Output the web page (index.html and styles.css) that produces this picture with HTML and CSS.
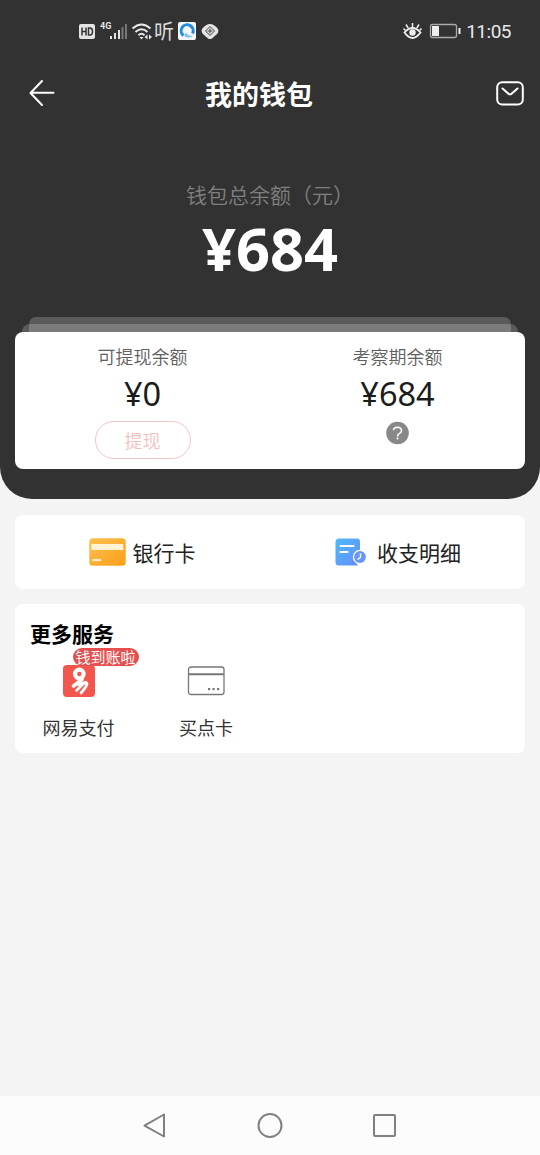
FILE: index.html
```html
<!DOCTYPE html>
<html lang="zh-CN">
<head>
<meta charset="utf-8">
<title>我的钱包</title>
<link rel="stylesheet" href="styles.css">
</head>
<body>
<div class="screen">
  <section class="hero">
    <div class="status">
      <div class="status-left">
        <svg width="145" height="22" viewBox="0 0 145 22">
          <rect x="1" y="4" width="16" height="15" rx="2" fill="#e4e4e4"/>
          <path d="M4 7.500v8M8 7.500v8M4 11.500h4M10.500 8v7h1.500q2.500 0 2.500-3.500T12 8z" fill="none" stroke="#333" stroke-width="1.500"/>
          <g fill="#e4e4e4"><rect x="32" y="16" width="2" height="3"/><rect x="36" y="13" width="2" height="6"/><rect x="40" y="10" width="2" height="9"/></g>
          <g fill="#777"><rect x="43.500" y="7" width="2" height="12"/><rect x="47" y="4" width="2" height="15"/></g>
          <g fill="none" stroke="#e8e8e8" stroke-width="1.900"><path d="M54.500 8.500q9-8 18 0M57.500 12q6-5.500 12 0M60.500 15.200q3-2.800 6 0"/></g>
          <path d="M61.500 17l2 2.500 2-2.500zM69.500 14.500l-3 2.500 3 2.500zM71 14.500l3 2.500-3 2.500z" fill="#e8e8e8"/>
          <rect x="100" y="2" width="18" height="18" rx="2" fill="#f4f8fc"/>
          <path d="M105.500 15.500a6 6 0 1 1 9-2" fill="none" stroke="#238be0" stroke-width="3"/>
          <path d="M106 15q1 3 5 2.500 3 0 4-2-5 1-6.500-3z" fill="#7fc1f4"/>
          <path d="M124 9q8-10 16 0 1 3-1 5l-5 4.500q-2 1.200-4 0l-5-4.500q-2-2-1-5z" fill="#e4e4e4"/>
          <path d="M132 6.500l4.500 4.500-4.500 4.500-4.500-4.500zM129.500 11h5M132 8.500v5" fill="none" stroke="#444" stroke-width="1"/>
        </svg>
        <span class="net">4G</span>
        <span class="listen">听</span>
      </div>
      <div class="status-right">
        <svg width="58" height="22" viewBox="0 0 58 22" fill="none" stroke="#eee">
          <path d="M1.500 12.500q8-9 16 0-8 11-16 0z" stroke-width="1.800"/>
          <circle cx="9.500" cy="12.500" r="3.200" fill="#eee" stroke="none"/>
          <path d="M9.500 3v4M3 4.500l2.200 3.500M16 4.500L13.800 8M.5 8.500l2 2M18.500 8.500l-2 2" stroke-width="1.500"/>
          <rect x="27.500" y="4.500" width="26" height="13" rx="2" stroke="#aaa" stroke-width="1.300"/>
          <rect x="29" y="6" width="7" height="10" fill="#eee" stroke="none"/>
          <path d="M56.500 8v6" stroke-width="2"/>
        </svg>
        <span class="time">11:05</span>
      </div>
    </div>
    <header class="bar">
      <svg width="26" height="28" viewBox="0 0 26 28" fill="none" stroke="#fff" stroke-width="2" stroke-linecap="round" stroke-linejoin="round"><path d="M13 2L1.500 14 13 26M2 13.800h22.500"/></svg>
      <h1 class="title">我的钱包</h1>
      <svg width="28" height="25" viewBox="0 0 28 25" fill="none" stroke="#fff" stroke-width="2" stroke-linecap="round" stroke-linejoin="round"><rect x="1.200" y="1.200" width="25.600" height="22.300" rx="5"/><path d="M6.500 7.500l6 5.300q1.500 1 3 0l6-5.300"/></svg>
    </header>
    <div class="total-label">钱包总余额（元）</div>
    <div class="total">¥684</div>
    <div class="layer back"></div>
    <div class="layer middle"></div>
    <div class="balances">
      <div class="balance">
        <div class="label">可提现余额</div>
        <div class="amount">¥0</div>
        <button class="withdraw">提现</button>
      </div>
      <div class="balance">
        <div class="label">考察期余额</div>
        <div class="amount">¥684</div>
        <svg class="help" width="24" height="24" viewBox="0 0 24 24"><circle cx="11.500" cy="12" r="11.300" fill="#888"/><path d="M7.500 9.300Q7.700 6.200 11.500 6.200q4 .2 4 3.300 0 1.800-2 2.900-2 1-2 3" fill="none" stroke="#fff" stroke-width="1.600"/><circle cx="11.500" cy="17.500" r="1.100" fill="#fff"/></svg>
      </div>
    </div>
  </section>
  <main class="content">
    <section class="card links">
      <div class="link">
        <svg width="37" height="28" viewBox="0 0 37 28"><defs><linearGradient id="gold" x2="1" y2="1"><stop stop-color="#fcc04f"/><stop offset="1" stop-color="#fd9e1b"/></linearGradient></defs><rect x=".3" y=".3" width="36.400" height="27.400" rx="3.500" fill="url(#gold)"/><rect x="2.300" y="6" width="32" height="6" fill="#fff3d5"/><path d="M3.500 22h8.500" stroke="#fff0cc" stroke-width="2.200"/></svg>
        <span class="bank">银行卡</span>
      </div>
      <div class="link">
        <svg width="32" height="28" viewBox="0 0 32 28"><defs><linearGradient id="blue" x2="1" y2="1"><stop stop-color="#4cbcf9"/><stop offset="1" stop-color="#688bfa"/></linearGradient></defs><path d="M4 .5h18a3 3 0 0 1 3 3V12a7 7 0 0 0-5 11l3 4.500H4a3.500 3.500 0 0 1-3.500-3.500V4A3.500 3.500 0 0 1 4 .5z" fill="url(#blue)"/><path d="M5.500 8h13M5.500 14h7" stroke="#fff" stroke-width="2.200" stroke-linecap="round"/><circle cx="25" cy="19" r="7.200" fill="#fff"/><circle cx="25" cy="19" r="5.900" fill="#6896fa"/><path d="M25.500 15.200v4.300l-3 2" fill="none" stroke="#fff" stroke-width="1.400"/></svg>
        <span class="detail">收支明细</span>
      </div>
    </section>
    <section class="card services">
      <h2 class="heading">更多服务</h2>
      <div class="grid">
        <div class="service">
          <div class="icon">
            <svg width="32" height="32" viewBox="0 0 32 32"><rect width="32" height="32" rx="4" fill="#f4554c"/><g fill="none" stroke="#fff" stroke-linecap="round" stroke-linejoin="round"><circle cx="16.300" cy="9" r="4.300" stroke-width="4.200"/><path d="M19 14.500L10.500 21" stroke-width="3.600"/><path d="M15.500 19.500l7.500-2" stroke-width="3"/><path d="M20.500 18.500l-7 7M24 18.500q.5 2-6 9.500" stroke-width="2.800"/></g></svg>
            <span class="badge">钱到账啦</span>
          </div>
          <span class="name">网易支付</span>
        </div>
        <div class="service">
          <div class="icon">
            <svg width="38" height="30" viewBox="0 0 38 30"><rect x="1.500" y="1" width="35.500" height="27.500" rx="2.500" fill="none" stroke="#777" stroke-width="1.300"/><path d="M1.500 8.300H37" stroke="#777" stroke-width="2"/><g fill="#777"><rect x="21" y="22" width="2.200" height="2.200"/><rect x="25.500" y="22" width="2.200" height="2.200"/><rect x="30" y="22" width="2.200" height="2.200"/></g></svg>
          </div>
          <span class="name">买点卡</span>
        </div>
      </div>
    </section>
  </main>
  <nav class="system-nav">
    <svg width="24" height="28" viewBox="0 0 24 28"><path d="M22 2.500v22L2.500 13.600z" fill="none" stroke="#808080" stroke-width="2" stroke-linejoin="round"/></svg>
    <svg width="26" height="26" viewBox="0 0 26 26"><circle cx="13" cy="12.500" r="11.500" fill="none" stroke="#808080" stroke-width="2"/></svg>
    <svg width="24" height="24" viewBox="0 0 24 24"><rect x="1" y="1" width="21" height="21" rx="1" fill="none" stroke="#808080" stroke-width="2"/></svg>
  </nav>
</div>
</body>
</html>
```
FILE: styles.css
```css
* { box-sizing: border-box; }
body {
  margin: 0;
  font-family: "Noto Sans CJK SC", sans-serif;
  color: #222;
}
svg { display: block; flex: none; }
.screen {
  display: flex;
  flex-direction: column;
  width: 540px;
  height: 1155px;
  background: #f4f4f4;
  overflow: hidden;
}
.hero {
  display: flex;
  flex-direction: column;
  align-items: center;
  height: 499px;
  flex: none;
  background: #323232;
  border-radius: 0 0 32px 32px;
}
.status {
  display: flex;
  justify-content: space-between;
  align-items: center;
  width: 100%;
  height: 62px;
  padding: 0 29px 0 78px;
}
.status-left { position: relative; }
.net {
  position: absolute;
  left: 22px;
  top: 0;
  font: bold 9px/12px Roboto, sans-serif;
  color: #e4e4e4;
}
.listen {
  position: absolute;
  left: 76px;
  top: 1px;
  font-size: 20px;
  line-height: 20px;
  color: #ddd;
}
.status-right { display: flex; align-items: center; gap: 5px; }
.time { font: 19px/22px Roboto, sans-serif; color: #e8e8e8; letter-spacing: -0.5px; padding-top: 2px; }
.bar {
  display: flex;
  justify-content: space-between;
  align-items: center;
  width: 100%;
  height: 62px;
  padding: 0 16px 0 29px;
}
.title {
  margin: 2px 33px 0 0;
  font-size: 27px;
  line-height: 36px;
  font-weight: 700;
  color: #fff;
}
.total-label { margin-top: 54px; font-size: 21px; line-height: 32px; font-weight: 350; color: #808080; }
.total { margin-top: 3px; font-family: "Noto Sans", sans-serif; font-size: 59.5px; line-height: 70px; font-weight: 700; color: #fff; }
.layer { flex: none; border-radius: 8px 8px 0 0; }
.back { width: 482px; height: 7px; margin-top: 34px; background: #5b5b5b; }
.middle { width: 496px; height: 8px; background: linear-gradient(90deg, #5b5b5b 7px, #7b7b7b 7px 489px, #5b5b5b 489px); }
.balances {
  display: grid;
  grid-template-columns: 1fr 1fr;
  width: 510px;
  height: 137px;
  background: #fff;
  border-radius: 8px;
}
.balance { display: flex; flex-direction: column; align-items: center; padding-top: 10px; }
.label { font-size: 18px; line-height: 28px; color: #606060; font-weight: 350; }
.amount { margin-top: 2px; font-family: "Noto Sans", sans-serif; font-size: 32.5px; line-height: 44px; color: #1c1c1c; }
.withdraw {
  width: 96px;
  height: 38px;
  margin-top: 5px;
  padding: 0;
  border: 1px solid #f5c4c6;
  border-radius: 19px;
  background: #fff;
  font: 350 18px/34px "Noto Sans CJK SC", sans-serif;
  color: #f5bfbf;
}
.help { margin-top: 5px; }
.content { flex: 1; display: flex; flex-direction: column; gap: 15px; padding: 16px 15px; }
.card { background: #fff; border-radius: 8px; }
.links { display: grid; grid-template-columns: 1fr 1fr; height: 74px; }
.link { display: flex; align-items: center; justify-content: center; gap: 7px; padding-right: 1px; font-size: 21px; line-height: 30px; }
.link:last-child { gap: 10px; padding: 0 0 0 1px; }
.services { height: 149px; padding: 15px; }
.heading { margin: 0; font-size: 21px; line-height: 28px; font-weight: 700; color: #000; }
.grid { display: grid; grid-template-columns: 127px 128px; margin-left: -15px; }
.service { display: flex; flex-direction: column; align-items: center; }
.icon { position: relative; display: flex; align-items: center; height: 68px; }
.badge {
  position: absolute;
  left: 10px;
  top: 1px;
  height: 18px;
  padding: 0 3px;
  border-radius: 9px;
  background: #e54f4f;
  color: #fff;
  font-size: 15px;
  line-height: 17px;
  white-space: nowrap;
}
.name { font-size: 18px; line-height: 24px; color: #333; }
.system-nav {
  display: flex;
  align-items: center;
  justify-content: space-between;
  flex: none;
  height: 59px;
  padding: 0 143px 0 142px;
  background: #fcfcfc;
}
```
